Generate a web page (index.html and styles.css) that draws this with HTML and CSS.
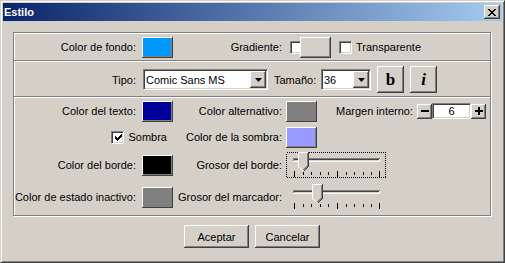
FILE: index.html
```html
<!DOCTYPE html>
<html lang="es">
<head>
    <meta charset="UTF-8">
    <meta name="viewport" content="width=device-width, initial-scale=1.0">
    <title>Estilo</title>
    <link rel="stylesheet" href="styles.css">
</head>
<body>

<div class="ventana">
    <div class="titulo">
        <span class="titulo-texto">Estilo</span>
        <button class="boton cerrar" type="button">
            <svg width="8" height="7" viewBox="0 0 8 7"><path d="M0 0h2v1H0z M6 0h2v1H6z M1 1h2v1H1z M5 1h2v1H5z M2 2h4v1H2z M3 3h2v1H3z M2 4h4v1H2z M1 5h2v1H1z M5 5h2v1H5z M0 6h2v1H0z M6 6h2v1H6z" fill="#000"/></svg>
        </button>
    </div>

    <div class="cuerpo">
        <div class="panel">
            <!-- fondo -->
            <div class="fila fila-fondo">
                <span class="etq-1">Color de fondo:</span>
                <button class="muestra azul" type="button"></button>
                <span class="etq-2">Gradiente:</span>
                <span class="casilla casilla-grad"></span>
                <button class="muestra gris-claro solapada" type="button"></button>
                <label class="opcion opcion-transp">
                    <span class="casilla"></span>
                    <span>Transparente</span>
                </label>
            </div>

            <!-- tipo de letra -->
            <div class="fila fila-tipo">
                <span class="etq-1">Tipo:</span>
                <div class="combo combo-tipo">
                    <span class="combo-valor">Comic Sans MS</span>
                    <span class="boton combo-flecha"><svg width="7" height="4" viewBox="0 0 7 4"><path d="M0 0h7L3.5 4z" fill="#000"/></svg></span>
                </div>
                <span class="etq-tam">Tamaño:</span>
                <div class="combo combo-tam">
                    <span class="combo-valor">36</span>
                    <span class="boton combo-flecha"><svg width="7" height="4" viewBox="0 0 7 4"><path d="M0 0h7L3.5 4z" fill="#000"/></svg></span>
                </div>
                <button class="boton estilo negrita" type="button">b</button>
                <button class="boton estilo cursiva" type="button">i</button>
            </div>

            <!-- colores y grosores -->
            <div class="fila rejilla">
                <span class="e1">Color del texto:</span>
                <button class="muestra azul-osc" type="button"></button>
                <span class="e3">Color alternativo:</span>
                <div class="margen">
                    <button class="muestra gris" type="button"></button>
                    <span class="etq-margen">Margen interno:</span>
                    <button class="boton giro" type="button"><svg width="8" height="2" viewBox="0 0 8 2"><rect width="8" height="2" fill="#000"/></svg></button>
                    <span class="campo">6</span>
                    <button class="boton giro" type="button"><svg width="8" height="8" viewBox="0 0 8 8"><path d="M3 0h2v8H3z M0 3h8v2H0z" fill="#000"/></svg></button>
                </div>

                <label class="opcion sombra">
                    <span class="casilla">
                        <svg width="7" height="7" viewBox="0 0 7 7"><path d="M6 0h1v1H6z M5 1h2v1H5z M0 2h1v1H0z M4 2h3v1H4z M0 3h2v1H0z M3 3h3v1H3z M0 4h5v1H0z M1 5h3v1H1z M2 6h1v1H2z" fill="#000"/></svg>
                    </span>
                    <span>Sombra</span>
                </label>
                <span class="e3">Color de la sombra:</span>
                <div class="celda"><button class="muestra lila" type="button"></button></div>

                <span class="e1">Color del borde:</span>
                <button class="muestra negro" type="button"></button>
                <span class="e3">Grosor del borde:</span>
                <div class="celda">
                    <svg class="deslizador" width="100" height="26" viewBox="0 0 100 26">
                        <rect x="0.5" y="0.5" width="99" height="25" fill="none" stroke="#000" stroke-dasharray="1 1"/>
                        <path d="M7 6.5H94 M7.5 6V10" stroke="#808080"/>
                        <path d="M8 7.5H93" stroke="#404040"/>
                        <path d="M7 9.5H94 M93.5 7V10" stroke="#fff"/>
                        <path d="M8.5 19v6 M17.5 20v3 M25.5 20v3 M34.5 20v3 M42.5 20v3 M51.5 19v6 M60.5 20v3 M68.5 20v3 M77.5 20v3 M85.5 20v3 M93.5 19v6" stroke="#000"/>
                        <g transform="translate(12 0)">
                            <path d="M0 0H11V14L5.5 19.5L0 14z" fill="#d4d0c8"/>
                            <path d="M0.5 14V0.5H10 M0.5 14.5L5 19" stroke="#fff" fill="none"/>
                            <path d="M10.5 0V14.5L5.5 19.5" stroke="#404040" fill="none"/>
                            <path d="M9.5 1V14L5.5 18" stroke="#808080" fill="none"/>
                        </g>
                    </svg>
                </div>

                <span class="e1">Color de estado inactivo:</span>
                <button class="muestra gris" type="button"></button>
                <span class="e3">Grosor del marcador:</span>
                <div class="celda">
                    <svg class="deslizador" width="100" height="26" viewBox="0 0 100 26">
                        <path d="M7 6.5H94 M7.5 6V10" stroke="#808080"/>
                        <path d="M8 7.5H93" stroke="#404040"/>
                        <path d="M7 9.5H94 M93.5 7V10" stroke="#fff"/>
                        <path d="M8.5 19v6 M17.5 20v3 M25.5 20v3 M34.5 20v3 M42.5 20v3 M51.5 19v6 M60.5 20v3 M68.5 20v3 M77.5 20v3 M85.5 20v3 M93.5 19v6" stroke="#000"/>
                        <g transform="translate(26 0)">
                            <path d="M0 0H11V14L5.5 19.5L0 14z" fill="#d4d0c8"/>
                            <path d="M0.5 14V0.5H10 M0.5 14.5L5 19" stroke="#fff" fill="none"/>
                            <path d="M10.5 0V14.5L5.5 19.5" stroke="#404040" fill="none"/>
                            <path d="M9.5 1V14L5.5 18" stroke="#808080" fill="none"/>
                        </g>
                    </svg>
                </div>
            </div>
        </div>

        <div class="pie">
            <button class="boton accion" type="button">Aceptar</button>
            <button class="boton accion" type="button">Cancelar</button>
        </div>
    </div>
</div>

</body>
</html>
```

FILE: styles.css
```css
html, body {
    margin: 0;
    overflow: hidden;
    background-color: #d4d0c8;
}

body {
    font: 11px "Liberation Sans", Arial, sans-serif;
    color: #000;
}

/* marco de la ventana */
.ventana {
    width: 505px;
    height: 263px;
    box-sizing: border-box;
    border: 1px solid;
    border-color: #d4d0c8 #404040 #404040 #d4d0c8;
    box-shadow: inset 1px 1px #fff, inset -1px -1px #808080;
    padding: 2px;
    display: flex;
    flex-direction: column;
}

.titulo {
    height: 18px;
    flex-shrink: 0;
    display: flex;
    align-items: center;
    justify-content: space-between;
    padding: 0 2px 0 1px;
    background: linear-gradient(to right, #0a246a, #a6caf0);
}

.titulo-texto {
    color: white;
    font-weight: bold;
}

/* botones clasicos */
.boton {
    font: inherit;
    color: #000;
    border: none;
    padding: 0;
    margin: 0;
    background-color: #d4d0c8;
    box-shadow: inset -1px -1px #404040, inset 1px 1px #fff, inset -2px -2px #808080, inset 2px 2px #d4d0c8;
    display: flex;
    align-items: center;
    justify-content: center;
    box-sizing: border-box;
    flex-shrink: 0;
}

.cerrar {
    width: 16px;
    height: 14px;
}

.cuerpo {
    padding: 11px 11px 0 10px;
}

.panel {
    height: 184px;
    box-sizing: border-box;
    border: 1px solid #808080;
    box-shadow: inset 1px 1px #fff, 1px 1px #fff;
}

.fila + .fila {
    border-top: 1px solid #808080;
    box-shadow: inset 0 1px #fff;
}

.fila-fondo {
    height: 27px;
    box-sizing: border-box;
    padding-top: 1px;
    display: flex;
    align-items: center;
}

.fila-tipo {
    height: 36px;
    box-sizing: border-box;
    padding-top: 2px;
    display: flex;
    align-items: center;
}

.etq-1 {
    width: 122px;
    flex-shrink: 0;
    text-align: right;
    white-space: nowrap;
}

.etq-2 {
    width: 113px;
    flex-shrink: 0;
    box-sizing: border-box;
    padding-right: 4px;
    text-align: right;
}

/* muestras de color */
.muestra {
    width: 31px;
    height: 21px;
    border: none;
    padding: 0;
    margin: 0;
    flex-shrink: 0;
    box-shadow: inset -1px -1px #404040, inset 1px 1px #fff, inset -2px -2px #808080;
}

.fila-fondo .muestra {
    margin-left: 6px;
}

.fila-fondo .solapada {
    margin-left: -3px;
}

.azul { background-color: #0099ff; }
.azul-osc { background-color: #000099; }
.gris { background-color: #808080; }
.gris-claro { background-color: #d4d0c8; }
.lila { background-color: #9999ff; }
.negro { background-color: #000; }

/* casillas */
.casilla {
    width: 13px;
    height: 13px;
    box-sizing: border-box;
    flex-shrink: 0;
    border: 1px solid;
    border-color: #808080 #fff #fff #808080;
    box-shadow: inset 1px 1px #404040, inset -1px -1px #d4d0c8;
    background-color: #fff;
    display: flex;
    align-items: center;
    justify-content: center;
}

.casilla svg {
    margin: 1px 0 0 1px;
}

.casilla-grad {
    margin-left: 4px;
}

.opcion {
    display: flex;
    align-items: center;
    gap: 4px;
}

.opcion-transp {
    margin-left: 8px;
}

/* combos */
.combo {
    height: 21px;
    box-sizing: border-box;
    border: 1px solid;
    border-color: #808080 #fff #fff #808080;
    box-shadow: inset 1px 1px #404040, inset -1px -1px #d4d0c8;
    background-color: #fff;
    padding: 1px;
    display: flex;
    flex-shrink: 0;
}

.combo-valor {
    flex: 1;
    padding-left: 1px;
    padding-top: 3px;
    padding-top: 2px;
    margin-top: 1px;
}

.combo-flecha {
    width: 16px;
    height: 17px;
}

.combo-tipo {
    width: 125px;
    margin-left: 7px;
}

.etq-tam {
    width: 47px;
    margin-left: 6px;
    flex-shrink: 0;
}

.combo-tam {
    width: 50px;
}

.estilo {
    width: 27px;
    height: 27px;
    margin-left: 6px;
    font-family: "Liberation Serif", "Times New Roman", serif;
    font-weight: bold;
    font-size: 17px;
}

.cursiva {
    font-style: italic;
}

/* rejilla de colores */
.rejilla {
    display: grid;
    grid-template-columns: 128px 31px 113px 1fr;
    grid-template-rows: 26px 26px 30px 34px;
    align-items: center;
    padding-top: 1px;
}

.e1 {
    padding-right: 6px;
    text-align: right;
    white-space: nowrap;
}

.e3 {
    padding-right: 4px;
    text-align: right;
    white-space: nowrap;
}

.celda {
    display: flex;
    align-items: center;
}

.margen {
    display: flex;
    align-items: center;
}

.etq-margen {
    width: 81px;
    margin-left: 19px;
    flex-shrink: 0;
    white-space: nowrap;
}

.giro {
    width: 15px;
    height: 15px;
}

.campo {
    width: 39px;
    height: 16px;
    box-sizing: border-box;
    border: 1px solid;
    border-color: #808080 #fff #fff #808080;
    box-shadow: inset 1px 1px #404040, inset -1px -1px #d4d0c8;
    background-color: #fff;
    display: flex;
    align-items: center;
    justify-content: center;
}

.sombra {
    grid-column: 1 / 3;
    justify-self: end;
    margin-right: 6px;
}

.deslizador {
    display: block;
    shape-rendering: crispEdges;
}

/* botones de abajo */
.pie {
    display: flex;
    justify-content: center;
    gap: 6px;
    padding-top: 9px;
}

.accion {
    width: 65px;
    height: 23px;
}
```
